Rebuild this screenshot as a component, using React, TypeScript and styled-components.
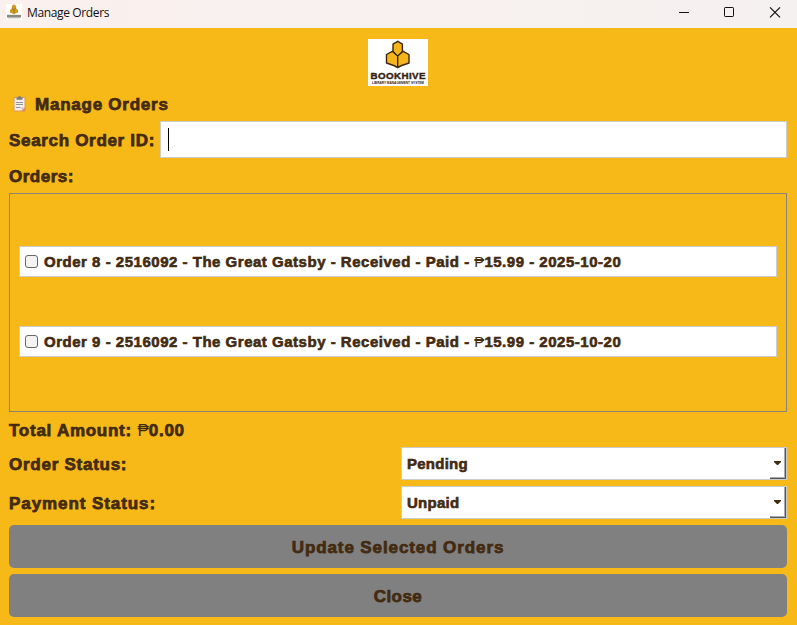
import React from "react";
import styled, { createGlobalStyle } from "styled-components";

const Global = createGlobalStyle`
  * { box-sizing: border-box; }
  body { margin: 0; background: #f7b918; }
`;

const Window = styled.div`
  width: 797px;
  height: 625px;
  display: flex;
  flex-direction: column;
  overflow: hidden;
  background: #f7b918;
  color: #432b11;
  font-family: "Liberation Sans", Arial, sans-serif;
  font-weight: 700;
`;

const TitleBar = styled.header`
  height: 28px;
  flex: none;
  display: flex;
  align-items: center;
  padding-left: 6px;
  background: linear-gradient(90deg, #faf0ee, #f5f1f0);
`;

const TitleIcon = styled.svg`
  width: 16px;
  height: 16px;
  margin-top: -4px;
`;

const WindowTitle = styled.span`
  flex: 1;
  margin: -2px 0 0 5px;
  font: 400 12px/18px "Open Sans", sans-serif;
  letter-spacing: -0.36px;
  color: #111;
`;

const WindowControls = styled.div`
  display: flex;
  height: 100%;
`;

const ControlIcon = styled.svg`
  width: 45px;
  height: 28px;
  fill: none;
  stroke: #111;
`;

const Body = styled.main`
  flex: 1;
  display: flex;
  flex-direction: column;
  padding: 11px 10px 8px 9px;
`;

const LogoRow = styled.div`
  height: 47px;
  display: flex;
  justify-content: center;
`;

const Label = styled.span<{ $spacing?: number }>`
  display: inline-block;
  padding-top: 2px;
  font-size: 17px;
  line-height: 20px;
  white-space: pre;
  letter-spacing: ${(p) => p.$spacing ?? 0.4}px;
  -webkit-text-stroke: 0.75px #432b11;
`;

const Peso = styled.span`
  font-weight: 400;
  letter-spacing: 0;
  -webkit-text-stroke: 0;
`;

const Heading = styled.div`
  height: 35px;
  display: flex;
  align-items: center;
  padding-left: 4px;
  gap: 9px;
`;

const SearchRow = styled.div`
  height: 37px;
  display: flex;
  justify-content: space-between;
  align-items: center;
`;

const SearchField = styled.div`
  width: 627px;
  height: 37px;
  border: 1px solid #ccc;
  background: #fff;
  display: flex;
  align-items: center;
  padding-left: 7px;
`;

const Caret = styled.i`
  width: 1px;
  height: 23px;
  background: #000;
`;

const LabelRow = styled.div`
  height: 35px;
  display: flex;
  align-items: center;
`;

const OrderList = styled.section`
  height: 219px;
  border: 1px solid #8a8473;
  padding: 52px 9px 0;
  display: flex;
  flex-direction: column;
  gap: 49px;
`;

const OrderItem = styled.label`
  height: 31px;
  display: flex;
  align-items: center;
  gap: 6px;
  padding-left: 5px;
  border: 1px solid #ccc;
  background: #fff;
`;

const CheckBox = styled.i`
  width: 13px;
  height: 13px;
  border: 1px solid #666;
  border-radius: 3px;
  background: #f3f3f3;
`;

const OrderText = styled.span`
  font-size: 15px;
  line-height: 20px;
  white-space: pre;
  letter-spacing: 0.515px;
  -webkit-text-stroke: 0.6px #432b11;
`;

const FormRow = styled.div`
  height: 39px;
  display: flex;
  align-items: flex-start;
  justify-content: space-between;
`;

const FormLabel = styled.div`
  display: flex;
  padding-top: 6px;
`;

const Select = styled.div`
  width: 386px;
  height: 33px;
  display: flex;
  justify-content: space-between;
  border: 1px solid #ccc;
  background: #fff;
`;

const SelectText = styled(OrderText)`
  padding: 6px 0 0 5px;
  letter-spacing: 0.25px;
`;

const SelectButton = styled.div`
  width: 16px;
  height: 31px;
  display: flex;
  align-items: center;
  justify-content: center;
  border-right: 1px solid #555;
  border-bottom: 1px solid #555;
  box-shadow: inset -1px -1px #aaa;
`;

const Arrow = styled.svg`
  width: 7px;
  height: 4px;
  flex: none;
`;

const Button = styled.button`
  width: 100%;
  height: 43px;
  flex: none;
  margin: 0 0 6px;
  padding: 1px 0 0;
  border: 0;
  border-radius: 5px;
  background: #808080;
  color: inherit;
  font: inherit;
`;

function Hive() {
  return (
    <g fill="#f7b51c" stroke="#3b2812" strokeWidth="1.400" strokeLinejoin="round">
      <path d="M25 5.200 29.700 2.300l4.700 2.900v7.300L29.700 18 25 12.500z" />
      <path d="M18.500 15.500 24.300 12.300 29.700 17v11.500l-4-2-7.200-2.500z" />
      <path d="M41 15.500 35.200 12.300 29.700 17v11.500l4-2 7.300-2.500z" />
    </g>
  );
}

function Logo() {
  return (
    <svg width="60" height="47" viewBox="0 0 60 47">
      <rect width="60" height="47" fill="#fff" />
      <Hive />
      <text x="2.500" y="39.600" textLength="55" fontFamily="Liberation Sans" fontWeight="700" fontSize="9.800" fill="#35220f" stroke="#35220f" strokeWidth=".4">BOOKHIVE</text>
      <text x="4" y="45.200" textLength="52" lengthAdjust="spacingAndGlyphs" fontFamily="Liberation Sans" fontWeight="700" fontSize="3" fill="#35220f">LIBRARY MANAGEMENT SYSTEM</text>
    </svg>
  );
}

function AppIcon() {
  return (
    <TitleIcon viewBox="0 0 16 16">
      <rect width="16" height="16" fill="#fff" />
      <path d="M8 0.300 10.200 2v2.500L12 6v2.500L8 10 4 8.500V6l1.800-1.500V2z" fill="#d19a1c" />
      <path d="M8 5v4.500M6 4.500 8 5.500l2-1" stroke="#94712a" strokeWidth=".7" fill="none" />
      <path d="M1 12.200h14" stroke="#8d887d" strokeWidth="2.800" />
      <path d="M2 14.800h12" stroke="#d6d2cb" strokeWidth=".8" />
    </TitleIcon>
  );
}

function Clipboard() {
  return (
    <svg width="13" height="16" viewBox="0 0 13 16">
      <path d="M1 1.500h11V15H1z" fill="#f2efee" stroke="#e4974a" />
      <path d="M8.500 15.200 12.200 11v4.200z" fill="#ef8354" />
      <path d="M8.500 14.800V11.500h3.200z" fill="#c6bfc9" />
      <path d="M3.500 1.500h1.700V.3h2.600v1.200h1.700v2.300h-6z" fill="#797c80" />
      <path d="M3 6.500h7M3 8.500h7M3 11.500h4.500" stroke="#92949b" strokeWidth="1" />
    </svg>
  );
}

function OrderRow({ id }: { id: number }) {
  return (
    <OrderItem>
      <CheckBox />
      <OrderText>
        Order {id} - 2516092 - The Great Gatsby - Received - Paid - <Peso>₱</Peso>15.99 - 2025-10-20
      </OrderText>
    </OrderItem>
  );
}

function StatusField({ label, value, spacing }: { label: string; value: string; spacing: number }) {
  return (
    <FormRow>
      <FormLabel><Label $spacing={spacing}>{label}</Label></FormLabel>
      <Select>
        <SelectText>{value}</SelectText>
        <SelectButton>
          <Arrow viewBox="0 0 7 4"><path d="M0 0h7v1L4 4H3L0 1z" fill="#432b11" /></Arrow>
        </SelectButton>
      </Select>
    </FormRow>
  );
}

export default function App() {
  return (
    <Window>
      <Global />
      <TitleBar>
        <AppIcon />
        <WindowTitle>Manage Orders</WindowTitle>
        <WindowControls>
          <ControlIcon viewBox="0 0 45 28"><path d="M17 12.500h10" /></ControlIcon>
          <ControlIcon viewBox="0 0 45 28"><rect x="17.500" y="7.500" width="9" height="9" rx=".7" /></ControlIcon>
          <ControlIcon viewBox="0 0 45 28"><path d="M18 7.300l10 10m0-10-10 10" strokeWidth="1.200" /></ControlIcon>
        </WindowControls>
      </TitleBar>
      <Body>
        <LogoRow><Logo /></LogoRow>
        <Heading><Clipboard /><Label $spacing={0.76}>Manage Orders</Label></Heading>
        <SearchRow>
          <Label $spacing={0.68}>Search Order ID:</Label>
          <SearchField><Caret /></SearchField>
        </SearchRow>
        <LabelRow><Label $spacing={0.5}>Orders:</Label></LabelRow>
        <OrderList>
          <OrderRow id={8} />
          <OrderRow id={9} />
        </OrderList>
        <LabelRow><Label $spacing={0.74}>Total Amount: <Peso>₱</Peso>0.00</Label></LabelRow>
        <StatusField label="Order Status:" value="Pending" spacing={0.74} />
        <StatusField label="Payment Status:" value="Unpaid" spacing={0.92} />
        <Button><Label $spacing={0.9}>Update Selected Orders</Label></Button>
        <Button><Label $spacing={0.45}>Close</Label></Button>
      </Body>
    </Window>
  );
}
